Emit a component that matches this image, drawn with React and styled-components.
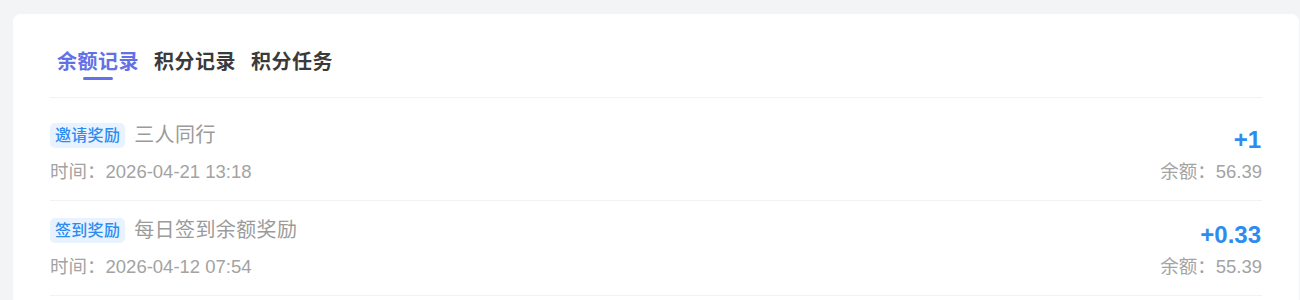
import styled, { createGlobalStyle } from "styled-components";

const GlobalStyle = createGlobalStyle`
  * { box-sizing: border-box; }
  body {
    margin: 0;
    background-color: #f3f4f6;
    font-family: "Liberation Sans", "Noto Sans CJK SC", sans-serif;
  }
`;
const Page = styled.div`
  padding: 14px 1px 0 13px;
  min-height: 300px;
`;
const Card = styled.div`
  background-color: #fff;
  border-radius: 8px;
  padding: 34px 37px 40px;
`;
const TabBar = styled.div`
  display: flex;
  gap: 1px;
  padding-bottom: 17px;
  border-bottom: 1px solid #f1f2f4;
`;
const Tab = styled.div`
  display: flex;
  flex-direction: column;
  align-items: center;
  gap: 1px;
  padding: 0 7px;
  cursor: pointer;
`;
const TabText = styled.span`
  font-size: 20px;
  line-height: 28px;
  font-weight: 700;
  letter-spacing: 0.5px;
  color: ${(props) => (props.$active ? "#6370e6" : "#3a3a3a")};
`;
const Indicator = styled.span`
  width: 30px;
  height: 3px;
  border-radius: 2px;
  background-color: ${(props) => (props.$active ? "#6370e6" : "transparent")};
`;
const List = styled.ul`
  list-style: none;
  margin: 0;
  padding: 8px 0 0;
`;
const Row = styled.li`
  display: flex;
  justify-content: space-between;
  padding: 17px 0 16px;
  border-bottom: 1px solid #f1f2f4;
`;
const Left = styled.div`
  display: flex;
  flex-direction: column;
  gap: 12px;
`;
const TitleLine = styled.div`
  display: flex;
  align-items: center;
  gap: 9px;
  height: 25px;
`;
const Badge = styled.span`
  font-size: 16px;
  line-height: 21px;
  font-weight: 500;
  letter-spacing: 0.3px;
  padding: 2px 5px;
  border-radius: 5px;
  color: #2d8cf0;
  background-color: #e8f3ff;
`;
const Title = styled.span`
  font-size: 20px;
  line-height: 25px;
  letter-spacing: 0.4px;
  color: #9b9b9b;
`;
const Meta = styled.div`
  font-size: 18.5px;
  line-height: 24px;
  color: #a3a3a3;
`;
const Right = styled.div`
  display: flex;
  flex-direction: column;
  align-items: flex-end;
  justify-content: flex-end;
  gap: 8px;
`;
const Amount = styled.div`
  font-size: 24px;
  line-height: 25px;
  font-weight: 700;
  margin-right: 1px;
  color: #2d8cf0;
`;

const tabs = ["余额记录", "积分记录", "积分任务"];
const records = [
  { type: "邀请奖励", title: "三人同行", time: "2026-04-21 13:18", amount: "+1", balance: "56.39" },
  { type: "签到奖励", title: "每日签到余额奖励", time: "2026-04-12 07:54", amount: "+0.33", balance: "55.39" },
];

function App() {
  return (
    <Page>
      <GlobalStyle />
      <Card>
        <TabBar>
          {tabs.map((t, i) => (
            <Tab key={t}>
              <TabText $active={i === 0}>{t}</TabText>
              <Indicator $active={i === 0} />
            </Tab>
          ))}
        </TabBar>
        <List>
          {records.map((r) => (
            <Row key={r.time}>
              <Left>
                <TitleLine>
                  <Badge>{r.type}</Badge>
                  <Title>{r.title}</Title>
                </TitleLine>
                <Meta>时间：{r.time}</Meta>
              </Left>
              <Right>
                <Amount>{r.amount}</Amount>
                <Meta>余额：{r.balance}</Meta>
              </Right>
            </Row>
          ))}
        </List>
      </Card>
    </Page>
  );
}

export default App;
